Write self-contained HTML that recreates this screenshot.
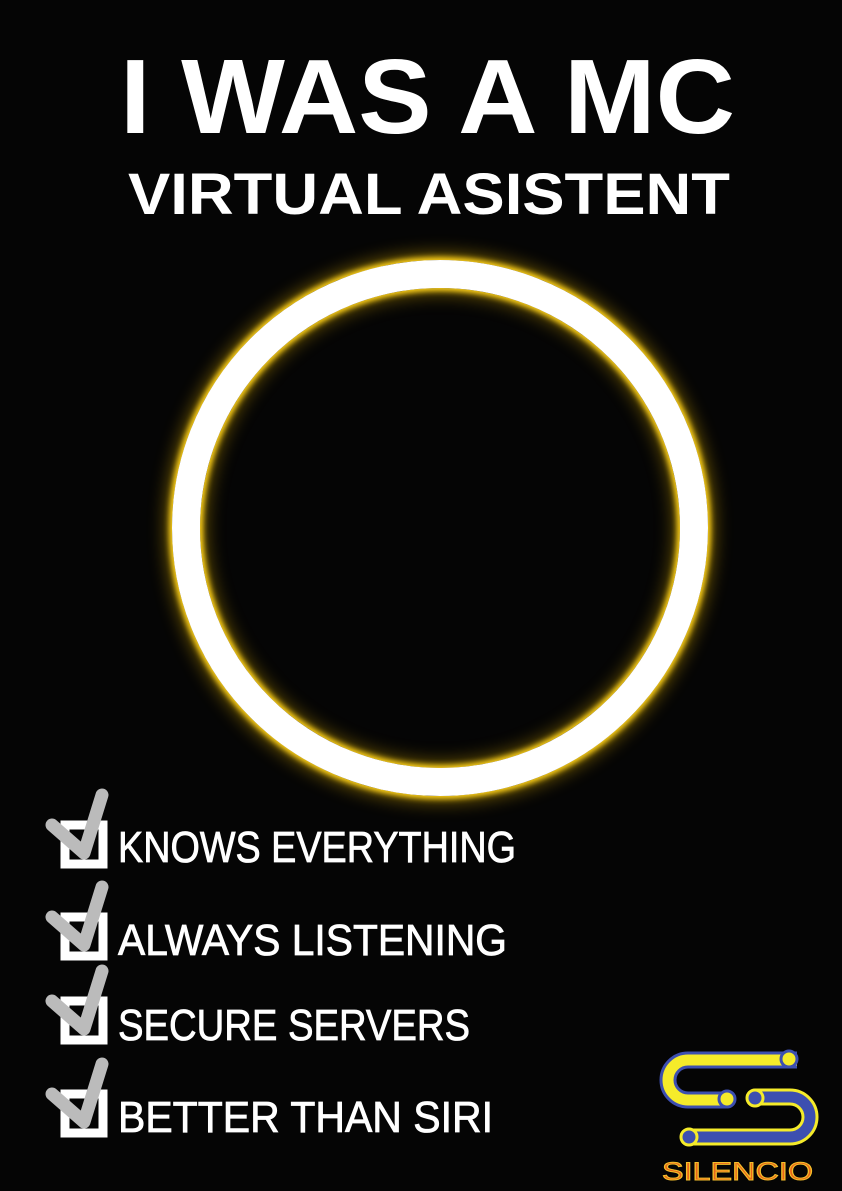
<!DOCTYPE html>
<html><head><meta charset="utf-8"><style>
html,body{margin:0;padding:0;background:#050505;}
body{width:842px;height:1191px;position:relative;overflow:hidden;}
.ring{position:absolute;left:172px;top:260px;width:480px;height:480px;border:28px solid #fff;border-radius:50%;
box-shadow:0 0 6px 3px #ffd21a,0 0 18px 6px rgba(255,200,0,.45),inset 0 0 6px 3px #ffd21a,inset 0 0 18px 6px rgba(255,200,0,.4);}
svg{position:absolute;left:0;top:0;}
</style></head><body>
<div class="ring"></div>
<svg width="842" height="1191" viewBox="0 0 842 1191">
<g font-family="Liberation Sans, DejaVu Sans, sans-serif" fill="#fff">
<text x="120" y="133" font-size="106" font-weight="bold" textLength="615" lengthAdjust="spacingAndGlyphs">I WAS A MC</text>
<text x="128" y="214" font-size="58" font-weight="bold" textLength="602" lengthAdjust="spacingAndGlyphs">VIRTUAL ASISTENT</text>
<g stroke="#fff" stroke-width="0.8">
<text x="118" y="862" font-size="44" textLength="398" lengthAdjust="spacingAndGlyphs">KNOWS EVERYTHING</text>
<text x="118" y="955" font-size="44" textLength="389" lengthAdjust="spacingAndGlyphs">ALWAYS LISTENING</text>
<text x="118" y="1040" font-size="44" textLength="352" lengthAdjust="spacingAndGlyphs">SECURE SERVERS</text>
<text x="118" y="1132" font-size="44" textLength="375" lengthAdjust="spacingAndGlyphs">BETTER THAN SIRI</text>
</g>
</g>
<g id="cb">
<rect x="65" y="825" width="38" height="39" fill="none" stroke="#fff" stroke-width="9"/>
<path d="M52 825 L84 853 L102 795" fill="none" stroke="#bbb" stroke-width="13" stroke-linecap="round" stroke-linejoin="round"/>
</g>
<use href="#cb" y="92"/>
<use href="#cb" y="176"/>
<use href="#cb" y="269"/>
<g fill="none" stroke-linecap="butt">
<path d="M797 1060 H688 A20 20 0 0 0 688 1100 H726" stroke="#3d4fb0" stroke-width="17"/>
<path d="M797 1060 H688 A20 20 0 0 0 688 1100 H726" stroke="#f5eb2a" stroke-width="11"/>
<path d="M755 1097 H790 A20 20 0 0 1 790 1137 H688" stroke="#f5eb2a" stroke-width="17"/>
<path d="M755 1097 H790 A20 20 0 0 1 790 1137 H688" stroke="#3d4fb0" stroke-width="11"/>
</g>
<circle cx="789" cy="1059" r="8" fill="#f5eb2a" stroke="#3d4fb0" stroke-width="3"/>
<circle cx="727" cy="1099" r="8" fill="#f5eb2a" stroke="#3d4fb0" stroke-width="3"/>
<circle cx="755" cy="1098" r="8" fill="#3d4fb0" stroke="#f5eb2a" stroke-width="3"/>
<circle cx="689" cy="1137" r="8" fill="#3d4fb0" stroke="#f5eb2a" stroke-width="3"/>
<text x="662" y="1180" font-family="Liberation Sans, sans-serif" font-size="25" fill="#e8661a" stroke="#f5c02a" stroke-width="1" textLength="151" lengthAdjust="spacingAndGlyphs">SILENCIO</text>
</svg>
</body></html>
